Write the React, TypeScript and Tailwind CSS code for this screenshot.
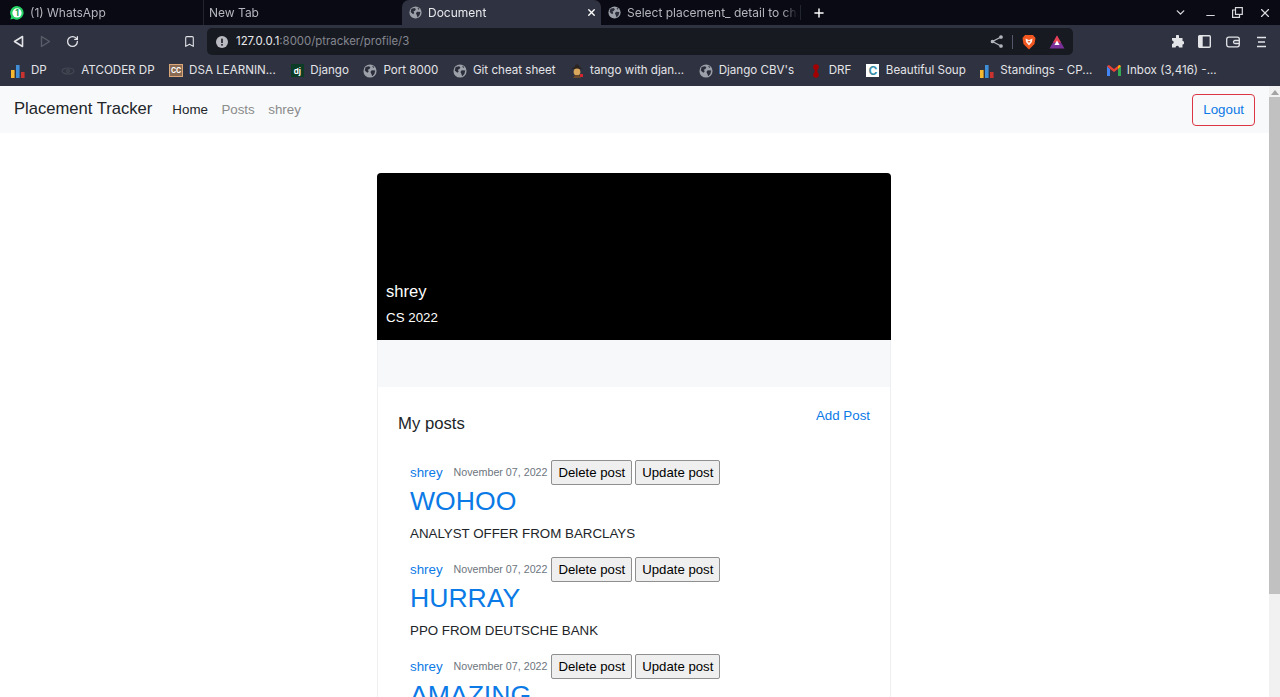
import React from 'react';
import { ChevronDown, Minus, X, Plus, RotateCw, Bookmark } from 'lucide-react';

const chromeFont = "font-['Inter','Noto_Sans',sans-serif]";

// Grey globe favicon used by sites with no icon
const Globe = ({ size = 14, color = '#9ca0a8' }: { size?: number; color?: string }) => (
  <svg width={size} height={size} viewBox="0 0 16 16" className="shrink-0">
    <circle cx="8" cy="8" r="7.5" fill={color} />
    <path d="M3 3.5 L7 2.5 L8.5 4 L7 6 L5.5 6.5 L6.5 8.5 L5 10 L2 7.5 Z" fill="#2b2e3a" />
    <path d="M10 7 L14 7.5 L13 11.5 L10.5 14 L9.5 11 L8.5 9 Z" fill="#2b2e3a" />
    <path d="M10.5 2 L13 3.5 L11.5 4.5 Z" fill="#2b2e3a" />
  </svg>
);

const Bars = () => (
  <svg width="14" height="14" viewBox="0 0 14 14" className="shrink-0">
    <rect x="0" y="6" width="3.6" height="8" fill="#f5b82e" />
    <rect x="5" y="1" width="3.6" height="13" fill="#3f8ed8" />
    <rect x="10" y="8" width="3.6" height="6" fill="#c8332f" />
  </svg>
);

const tabs = [
  { title: '(1) WhatsApp', w: 'w-[203px]', icon: 'wa' },
  { title: 'New Tab', w: 'w-[199px]', icon: 'none' },
  { title: 'Document', w: 'w-[199px]', icon: 'globe', active: true },
  { title: 'Select placement_ detail to change', w: 'w-[199px]', icon: 'globe' },
];

const TabStrip = () => (
  <div className="flex h-[25px] items-stretch bg-[#090a14] shrink-0">
    {tabs.map((t) => (
      <div
        key={t.title}
        className={`${t.w} flex items-center gap-[6px] overflow-hidden whitespace-nowrap text-[12px] ${
          t.active ? 'rounded-t-[7px] bg-[#2f3240] pl-[7px] pr-[4px] text-[#e8e9ec]' : 'text-[#b4b6bc]'
        } ${t.icon === 'none' ? 'pl-[5px] border-l border-[#22242e]' : ''} ${
          t.icon === 'wa' ? 'pl-[10px]' : ''
        } ${t.icon === 'globe' && !t.active ? 'pl-[7px] pr-[2px]' : ''}`}
      >
        {t.icon === 'wa' && (
          <svg width="14" height="14" viewBox="0 0 14 14" className="shrink-0">
            <path d="M7 0 A6.8 6.8 0 1 1 3.6 12.8 L0.4 13.6 L1.2 10.4 A6.8 6.8 0 0 1 7 0 Z" fill="#25d366" />
            <circle cx="7" cy="6.9" r="4.6" fill="#fff" />
            <text x="7" y="10" textAnchor="middle" fontSize="8.5" fontWeight="700" fill="#12a150">1</text>
          </svg>
        )}
        {t.icon === 'globe' && <Globe size={13} />}
        <span className="flex-1 overflow-hidden [mask-image:linear-gradient(to_left,transparent,black_16px)]">{t.title}</span>
        {t.active && <X size={11} strokeWidth={3} className="shrink-0 text-white" />}
      </div>
    ))}
    <div className="my-[5px] flex w-[37px] items-center justify-center border-l border-[#22242e]">
      <Plus size={14} strokeWidth={2.5} className="text-white" />
    </div>
    <div className="ml-auto flex items-center gap-[15px] pr-[8px] text-[#d8d9dc]">
      <ChevronDown size={13} strokeWidth={2.5} className="mr-[2px]" />
      <Minus size={13} className="mt-[6px]" />
      <svg width="11" height="11" viewBox="0 0 11 11" fill="none" stroke="currentColor" strokeWidth="1.2">
        <rect x="3.5" y="0.6" width="6.8" height="6.8" />
        <path d="M3.5 3 H0.6 V10.4 H7.5 V7.4" />
      </svg>
      <X size={14} />
    </div>
  </div>
);

const Toolbar = () => (
  <div className="flex h-[30px] items-center bg-[#2f3240] pt-[3px] shrink-0">
    <div className="flex w-[207px] items-center pl-[13px] text-[#e3e4e8]">
      <svg width="11" height="13" viewBox="0 0 11 13" fill="none" stroke="currentColor" strokeWidth="1.6" strokeLinejoin="round">
        <path d="M9.5 1.5 V11.5 L1.5 6.5 Z" />
      </svg>
      <svg width="11" height="13" viewBox="0 0 11 13" fill="none" stroke="#5a5d69" strokeWidth="1.4" strokeLinejoin="round" className="ml-[16px]">
        <path d="M1.5 1.5 V11.5 L9.5 6.5 Z" />
      </svg>
      <RotateCw size={13} strokeWidth={2.4} className="ml-[15px]" />
      <Bookmark size={13} strokeWidth={2} className="ml-[104px]" />
    </div>
    <div className="flex h-[27px] w-[866px] items-center rounded-[5px] bg-[#181a22] pl-[9px]">
      <svg width="12" height="12" viewBox="0 0 12 12" className="shrink-0">
        <circle cx="6" cy="6" r="6" fill="#b9bbc1" />
        <rect x="5.2" y="2.6" width="1.6" height="4.4" fill="#181a22" />
        <rect x="5.2" y="8" width="1.6" height="1.6" fill="#181a22" />
      </svg>
      <span className="ml-[8px] text-[11.4px] text-[#e8e9ec]">
        127.0.0.1<span className="text-[#84878f]">:8000/ptracker/profile/3</span>
      </span>
      <div className="ml-auto flex items-center pr-[8px]">
        <svg width="13" height="13" viewBox="0 0 13 13" fill="none" stroke="#b4b6bc" strokeWidth="1.3">
          <path d="M11 2 L2.5 6.5 L11 11" />
          <circle cx="11" cy="2" r="1.2" fill="#b4b6bc" />
          <circle cx="2.5" cy="6.5" r="1.2" fill="#b4b6bc" />
          <circle cx="11" cy="11" r="1.2" fill="#b4b6bc" />
        </svg>
        <div className="ml-[9px] h-[14px] w-px bg-[#55586a]" />
        <svg width="14" height="16" viewBox="0 0 14 16" className="ml-[9px]">
          <path d="M3 1 H11 L13.5 4 L12.5 10 L7 15.5 L1.5 10 L0.5 4 Z" fill="#f1571f" />
          <path d="M3.5 4.5 L7 6 L10.5 4.5 L10 8 L7 11.5 L4 8 Z" fill="#fff" opacity="0.9" />
          <path d="M5.5 7 H8.5 L7 9 Z" fill="#f1571f" />
        </svg>
        <svg width="16" height="14" viewBox="0 0 16 14" className="ml-[13px]">
          <path d="M8 0.5 L15.5 13.5 H0.5 Z" fill="#7a2f96" />
          <path d="M8 0.5 L12 7.5 H4 Z" fill="#e8404f" />
          <path d="M8 5.5 L10.6 10 H5.4 Z" fill="#fff" />
        </svg>
      </div>
    </div>
    <div className="flex flex-1 items-center pl-[98px] text-[#e3e4e8]">
      <svg width="13" height="13" viewBox="0 0 13 13" fill="currentColor">
        <path d="M5 0.5 A1.6 1.6 0 0 1 8 1.5 V3 H11.5 V6 A1.7 1.7 0 1 1 11.5 9.4 V12.5 H8 A1.7 1.7 0 1 0 4.6 12.5 H1 V9 A1.7 1.7 0 1 0 1 5.6 V3 H5 Z" />
      </svg>
      <svg width="13" height="13" viewBox="0 0 13 13" fill="none" className="ml-[14px]">
        <rect x="0.7" y="0.7" width="11.6" height="11.6" rx="1" stroke="currentColor" strokeWidth="1.4" />
        <rect x="0.7" y="0.7" width="4" height="11.6" fill="currentColor" />
      </svg>
      <svg width="14" height="12" viewBox="0 0 14 12" fill="none" stroke="currentColor" strokeWidth="1.3" className="ml-[15px]">
        <rect x="0.7" y="1.2" width="12.6" height="9.6" rx="2" />
        <path d="M13 4.5 H9 A1.5 1.5 0 0 0 9 7.5 H13" />
      </svg>
      <svg width="11" height="12" viewBox="0 0 11 12" stroke="currentColor" strokeWidth="1.3" className="ml-[16px]">
        <path d="M1 1.5 H10 M2 6 H9 M1 10.5 H10" />
      </svg>
    </div>
  </div>
);

const bookmarks: { title: string; icon: React.ReactNode }[] = [
  { title: 'DP', icon: <Bars /> },
  {
    title: 'ATCODER DP',
    icon: (
      <svg width="14" height="8" viewBox="0 0 14 8" fill="none" stroke="#454854" strokeWidth="1.2">
        <ellipse cx="7" cy="4" rx="6" ry="3" />
        <circle cx="7" cy="4" r="1.4" />
      </svg>
    ),
  },
  {
    title: 'DSA LEARNIN...',
    icon: <span className="flex h-[13px] w-[14px] items-center justify-center border border-[#d9a77a] bg-[#8a6a52] text-[7px] font-bold leading-none text-white">CC</span>,
  },
  {
    title: 'Django',
    icon: <span className="flex h-[13px] w-[13px] items-center justify-center bg-[#0c3c26] text-[8px] font-bold leading-none text-white">dj</span>,
  },
  { title: 'Port 8000', icon: <Globe /> },
  { title: 'Git cheat sheet', icon: <Globe /> },
  {
    title: 'tango with djan...',
    icon: (
      <svg width="14" height="14" viewBox="0 0 14 14">
        <path d="M1 5 H13 L10 3.5 L8 0.5 H6 L4 3.5 Z" fill="#2a2320" />
        <circle cx="7" cy="8" r="3.4" fill="#d9a85c" />
        <path d="M3 14 L5 11 H9 L11 14 Z" fill="#6a4a2a" />
        <rect x="10" y="10" width="3" height="3" fill="#d5262e" />
      </svg>
    ),
  },
  { title: "Django CBV's", icon: <Globe /> },
  {
    title: 'DRF',
    icon: (
      <svg width="8" height="14" viewBox="0 0 8 14">
        <circle cx="4" cy="3" r="2.8" fill="#a30000" />
        <circle cx="4" cy="11" r="2.8" fill="#a30000" />
        <rect x="2.5" y="3" width="3" height="8" fill="#a30000" />
      </svg>
    ),
  },
  {
    title: 'Beautiful Soup',
    icon: <span className="flex h-[13px] w-[13px] items-center justify-center bg-white text-[12px] font-bold leading-none text-[#3a8fa8]">C</span>,
  },
  { title: 'Standings - CP...', icon: <Bars /> },
  {
    title: 'Inbox (3,416) -...',
    icon: (
      <svg width="14" height="11" viewBox="0 0 14 11">
        <path d="M0 1 V11 H3 V4 Z" fill="#4285f4" />
        <path d="M14 1 V11 H11 V4 Z" fill="#34a853" />
        <path d="M0 1 L2 0 L7 4 L12 0 L14 1 L11 4 L7 7 L3 4 Z" fill="#ea4335" />
        <path d="M12 0 L14 1 L11 4 V2 Z" fill="#fbbc04" />
      </svg>
    ),
  },
];

const BookmarksBar = () => (
  <div className="flex h-[31px] items-center gap-[14.5px] bg-[#2f3240] pl-[11px] pt-[1px] text-[11.6px] text-[#e3e4e8] whitespace-nowrap shrink-0">
    {bookmarks.map((b) => (
      <div key={b.title} className="flex items-center gap-[6px]">
        <span className="flex w-[14px] items-center justify-center">{b.icon}</span>
        <span>{b.title}</span>
      </div>
    ))}
  </div>
);

const Navbar = () => (
  <nav className="flex h-[47px] items-center bg-[#f8f9fa] pl-[14px] pr-[14px]">
    <a className="text-[16.6px] text-[#212529]">Placement Tracker</a>
    <div className="ml-[20px] flex gap-[13.5px] text-[13.33px]">
      <a className="text-[#212529]">Home</a>
      <a className="text-[#8a8b8c]">Posts</a>
      <a className="text-[#8a8b8c]">shrey</a>
    </div>
    <a className="ml-auto rounded-[4px] border border-[#dc3545] px-[10px] py-[6px] text-[13.33px] leading-[18px] text-[#0b7ae6]">
      Logout
    </a>
  </nav>
);

const posts = [
  { title: 'WOHOO', body: 'ANALYST OFFER FROM BARCLAYS' },
  { title: 'HURRAY', body: 'PPO FROM DEUTSCHE BANK' },
  { title: 'AMAZING', body: '' },
];

const PostButton = ({ children }: { children: React.ReactNode }) => (
  <button className="h-[25px] rounded-[2px] border border-[#8f8f8f] bg-[#efefef] px-[6px] text-[13.2px] leading-none text-black">
    {children}
  </button>
);

const Post = ({ title, body }: { title: string; body: string }) => (
  <article className="h-[97px] pl-[12px]">
    <div className="flex h-[25px] items-center">
      <a className="text-[13.33px] text-[#0b7ae6]">shrey</a>
      <small className="ml-[11px] mr-[4px] text-[10.7px] text-[#6c757d]">November 07, 2022</small>
      <div className="flex gap-[3px]">
        <PostButton>Delete post</PostButton>
        <PostButton>Update post</PostButton>
      </div>
    </div>
    <h2 className="text-[26.6px] leading-[32px] text-[#0b7ae6]">{title}</h2>
    <p className="mt-[7px] text-[13.33px] leading-[20px] text-[#212529]">{body}</p>
  </article>
);

const ProfileCard = () => (
  <div className="mx-auto mt-[40px] w-[514px] bg-white">
    <div className="flex h-[167px] flex-col justify-end rounded-t-[4px] bg-black pb-[12px] pl-[9px] text-white">
      <h5 className="text-[16.6px] leading-[20px]">shrey</h5>
      <p className="mt-[6px] text-[13.33px] leading-[20px]">CS 2022</p>
    </div>
    <div className="h-[47px] border-x border-[#eeeff0] bg-[#f7f8f9]" />
    <div className="border-x border-[#eeeff0] px-[20px] pt-[20px]">
      <div className="flex items-start justify-between">
        <h5 className="pt-[7px] text-[16.7px] leading-[20px] text-[#212529]">My posts</h5>
        <a className="text-[13.33px] leading-[18px] text-[#0b7ae6]">Add Post</a>
      </div>
      <div className="mt-[26px]">
        {posts.map((p) => (
          <Post key={p.title} title={p.title} body={p.body} />
        ))}
      </div>
    </div>
  </div>
);

const Scrollbar = () => (
  <div className="flex w-[11px] shrink-0 flex-col items-center bg-[#f1f1f1]">
    <div className="mt-[4px] h-0 w-0 border-x-[4px] border-b-[5px] border-x-transparent border-b-[#a3a3a3]" />
    <div className="mt-[2px] h-[497px] w-full bg-[#c1c1c1]" />
  </div>
);

export default function App() {
  return (
    <div className="flex h-[697px] w-[1280px] flex-col overflow-hidden bg-white font-['Liberation_Sans',Arial,sans-serif]">
      <div className={`flex flex-col ${chromeFont}`}>
        <TabStrip />
        <Toolbar />
        <BookmarksBar />
      </div>
      <div className="flex min-h-0 flex-1">
        <main className="min-w-0 flex-1 overflow-hidden">
          <Navbar />
          <div className="pr-[1px]">
            <ProfileCard />
          </div>
        </main>
        <Scrollbar />
      </div>
    </div>
  );
}
